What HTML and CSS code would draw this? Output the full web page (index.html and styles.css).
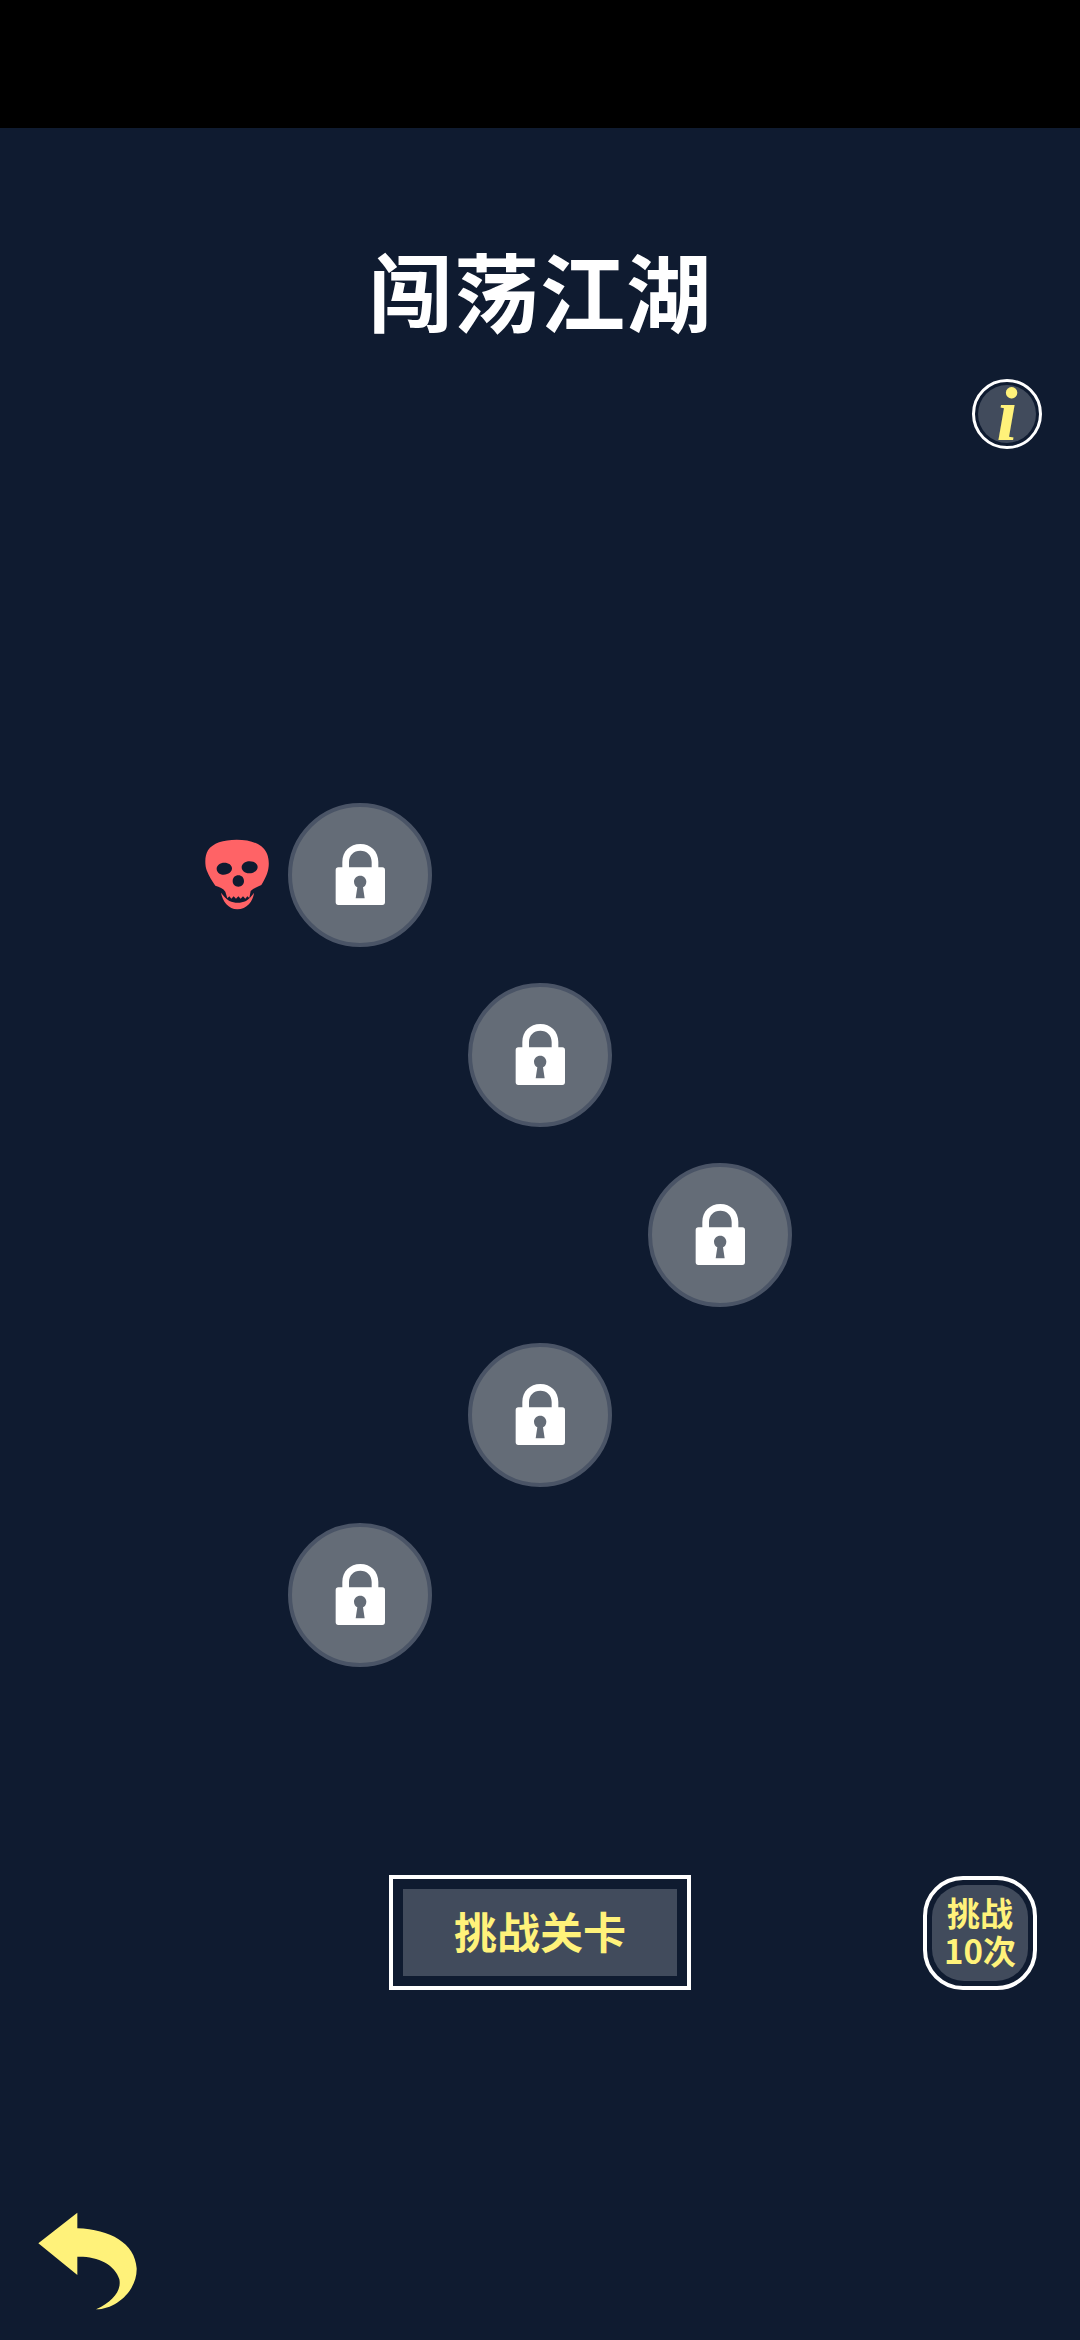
FILE: index.html
```html
<!DOCTYPE html>
<html lang="zh-CN">
<head>
    <meta charset="UTF-8" />
    <meta name="viewport" content="width=device-width, initial-scale=1.0" />
    <title>闯荡江湖</title>
    <link rel="stylesheet" href="styles.css">
</head>
<body>
    <svg class="icon-defs">
        <symbol id="lock" viewBox="0 0 240 270">
            <path fill="#fff" fill-rule="evenodd" d="M67 112V96C67 64 90 42 121 42C152 42 175 64 175 96V112H187C192 112 195 115 195 120V217C195 222 192 225 187 225H55C50 225 47 222 47 217V120C47 115 50 112 55 112ZM87 112H155V96C155 76 141 62 121 62C101 62 87 76 87 96ZM121 137C110 137 102 145 102 155C102 163 106 169 112 172L107 205H134L129 172C135 169 139 163 139 155C139 145 131 137 121 137Z"/>
        </symbol>
    </svg>

    <div class="status-bar"></div>

    <h1 class="title">闯荡江湖</h1>

    <div class="info-row">
        <button class="info-button"><span class="info-inner">i</span></button>
    </div>

    <div class="level-map">
        <div class="level col-1">
            <svg class="skull" viewBox="0 0 270 285">
                <path fill="#ff6366" fill-rule="evenodd" d="M140 44C100 44 68 54 54 76C44 92 44 118 50 136C56 152 66 168 76 182C88 186 100 190 106 200L112 220L118 214L124 221L131 214L138 221L145 214L152 221L159 214L166 221L172 214L178 219L182 198C190 190 202 186 214 180C224 164 234 146 236 124C238 100 232 78 214 64C196 50 170 44 140 44ZM103 113C116 113 126 120 126 130C126 140 116 149 101 149C88 149 80 141 80 131C80 121 90 113 103 113ZM179 109C193 109 203 116 203 126C203 136 192 145 177 145C164 145 155 137 155 127C155 117 165 109 179 109ZM145 151C155 151 162 158 162 168C162 178 155 185 145 185C135 185 128 178 128 168C128 158 135 151 145 151Z"/>
                <path fill="#ff6366" d="M93 203C100 212 108 222 118 228C134 235 152 235 168 228C178 222 186 212 192 203C190 228 170 253 142 253C116 253 97 228 93 203Z"/>
            </svg>
            <svg class="lock"><use href="#lock"/></svg>
        </div>
        <div class="level col-2"><svg class="lock"><use href="#lock"/></svg></div>
        <div class="level col-3"><svg class="lock"><use href="#lock"/></svg></div>
        <div class="level col-2"><svg class="lock"><use href="#lock"/></svg></div>
        <div class="level col-1"><svg class="lock"><use href="#lock"/></svg></div>
    </div>

    <div class="actions">
        <button class="challenge-button"><span class="challenge-inner">挑战关卡</span></button>
        <button class="repeat-button"><span class="repeat-inner">挑战<br>10次</span></button>
    </div>

    <div class="footer">
        <svg class="back-icon" viewBox="0 0 390 390">
            <path fill="#fff27a" d="M55 160L172 68V115C270 118 345 160 350 235C352 300 290 358 228 358C280 335 305 300 298 268C285 222 230 198 172 200V255Z"/>
        </svg>
    </div>
</body>
</html>
```

FILE: styles.css
```css
* {
    box-sizing: border-box;
    margin: 0;
    padding: 0;
}

body {
    width: 1080px;
    height: 2340px;
    overflow: hidden;
    background: #0f1b30;
    font-family: "Noto Sans CJK SC", "Noto Sans", sans-serif;
}

button {
    font-family: inherit;
    background: none;
    cursor: pointer;
}

.icon-defs {
    display: none;
}

.status-bar {
    height: 128px;
    background: #000;
}

.title {
    margin-top: 111px;
    height: 100px;
    line-height: 100px;
    text-align: center;
    font-size: 85px;
    font-weight: 700;
    letter-spacing: 1px;
    color: #fff;
}

.info-row {
    display: flex;
    justify-content: flex-end;
    margin-top: 40px;
    padding-right: 38px;
}

.info-button {
    width: 70px;
    height: 70px;
    padding: 3px;
    border: 3px solid #fff;
    border-radius: 50%;
}

.info-inner {
    display: flex;
    align-items: center;
    justify-content: center;
    width: 100%;
    height: 100%;
    border-radius: 50%;
    background: #414b5c;
    color: #fff27a;
    font-family: "Liberation Serif", serif;
    font-size: 76px;
    font-style: italic;
    font-weight: 700;
    line-height: 1;
}

.level-map {
    display: grid;
    grid-template-columns: repeat(3, 180px);
    grid-template-rows: repeat(5, 180px);
    justify-content: center;
    margin-top: 336px;
}

.level {
    position: relative;
    display: flex;
    align-items: center;
    justify-content: center;
    align-self: center;
    justify-self: center;
    width: 144px;
    height: 144px;
    border: 4px solid #4a5466;
    border-radius: 50%;
    background: #646c77;
}

.level:nth-child(1) { grid-row: 1; }
.level:nth-child(2) { grid-row: 2; }
.level:nth-child(3) { grid-row: 3; }
.level:nth-child(4) { grid-row: 4; }
.level:nth-child(5) { grid-row: 5; }

.col-1 { grid-column: 1; }
.col-2 { grid-column: 2; }
.col-3 { grid-column: 3; }

.lock {
    display: block;
    width: 80px;
    height: 90px;
}

.skull {
    position: absolute;
    left: -102px;
    top: 18px;
    width: 90px;
    height: 95px;
}

.actions {
    display: grid;
    grid-template-columns: 1fr auto 1fr;
    align-items: center;
    margin-top: 190px;
}

.challenge-button {
    grid-column: 2;
    width: 302px;
    height: 115px;
    padding: 10px;
    border: 4px solid #fff;
}

.challenge-inner {
    display: flex;
    align-items: center;
    justify-content: center;
    height: 100%;
    padding-bottom: 5px;
    background: #414b5c;
    color: #fff27a;
    font-size: 43px;
    font-weight: 700;
}

.repeat-button {
    grid-column: 3;
    justify-self: end;
    width: 114px;
    height: 114px;
    margin-right: 43px;
    padding: 5px;
    border: 4px solid #fff;
    border-radius: 40px;
}

.repeat-inner {
    display: flex;
    align-items: center;
    justify-content: center;
    height: 100%;
    padding-bottom: 3px;
    border-radius: 32px;
    background: #414b5c;
    color: #fff27a;
    font-size: 33px;
    font-weight: 700;
    line-height: 38px;
    text-align: center;
}

.footer {
    margin-top: 200px;
    padding-left: 20px;
}

.back-icon {
    display: block;
    width: 130px;
    height: 130px;
}
```
